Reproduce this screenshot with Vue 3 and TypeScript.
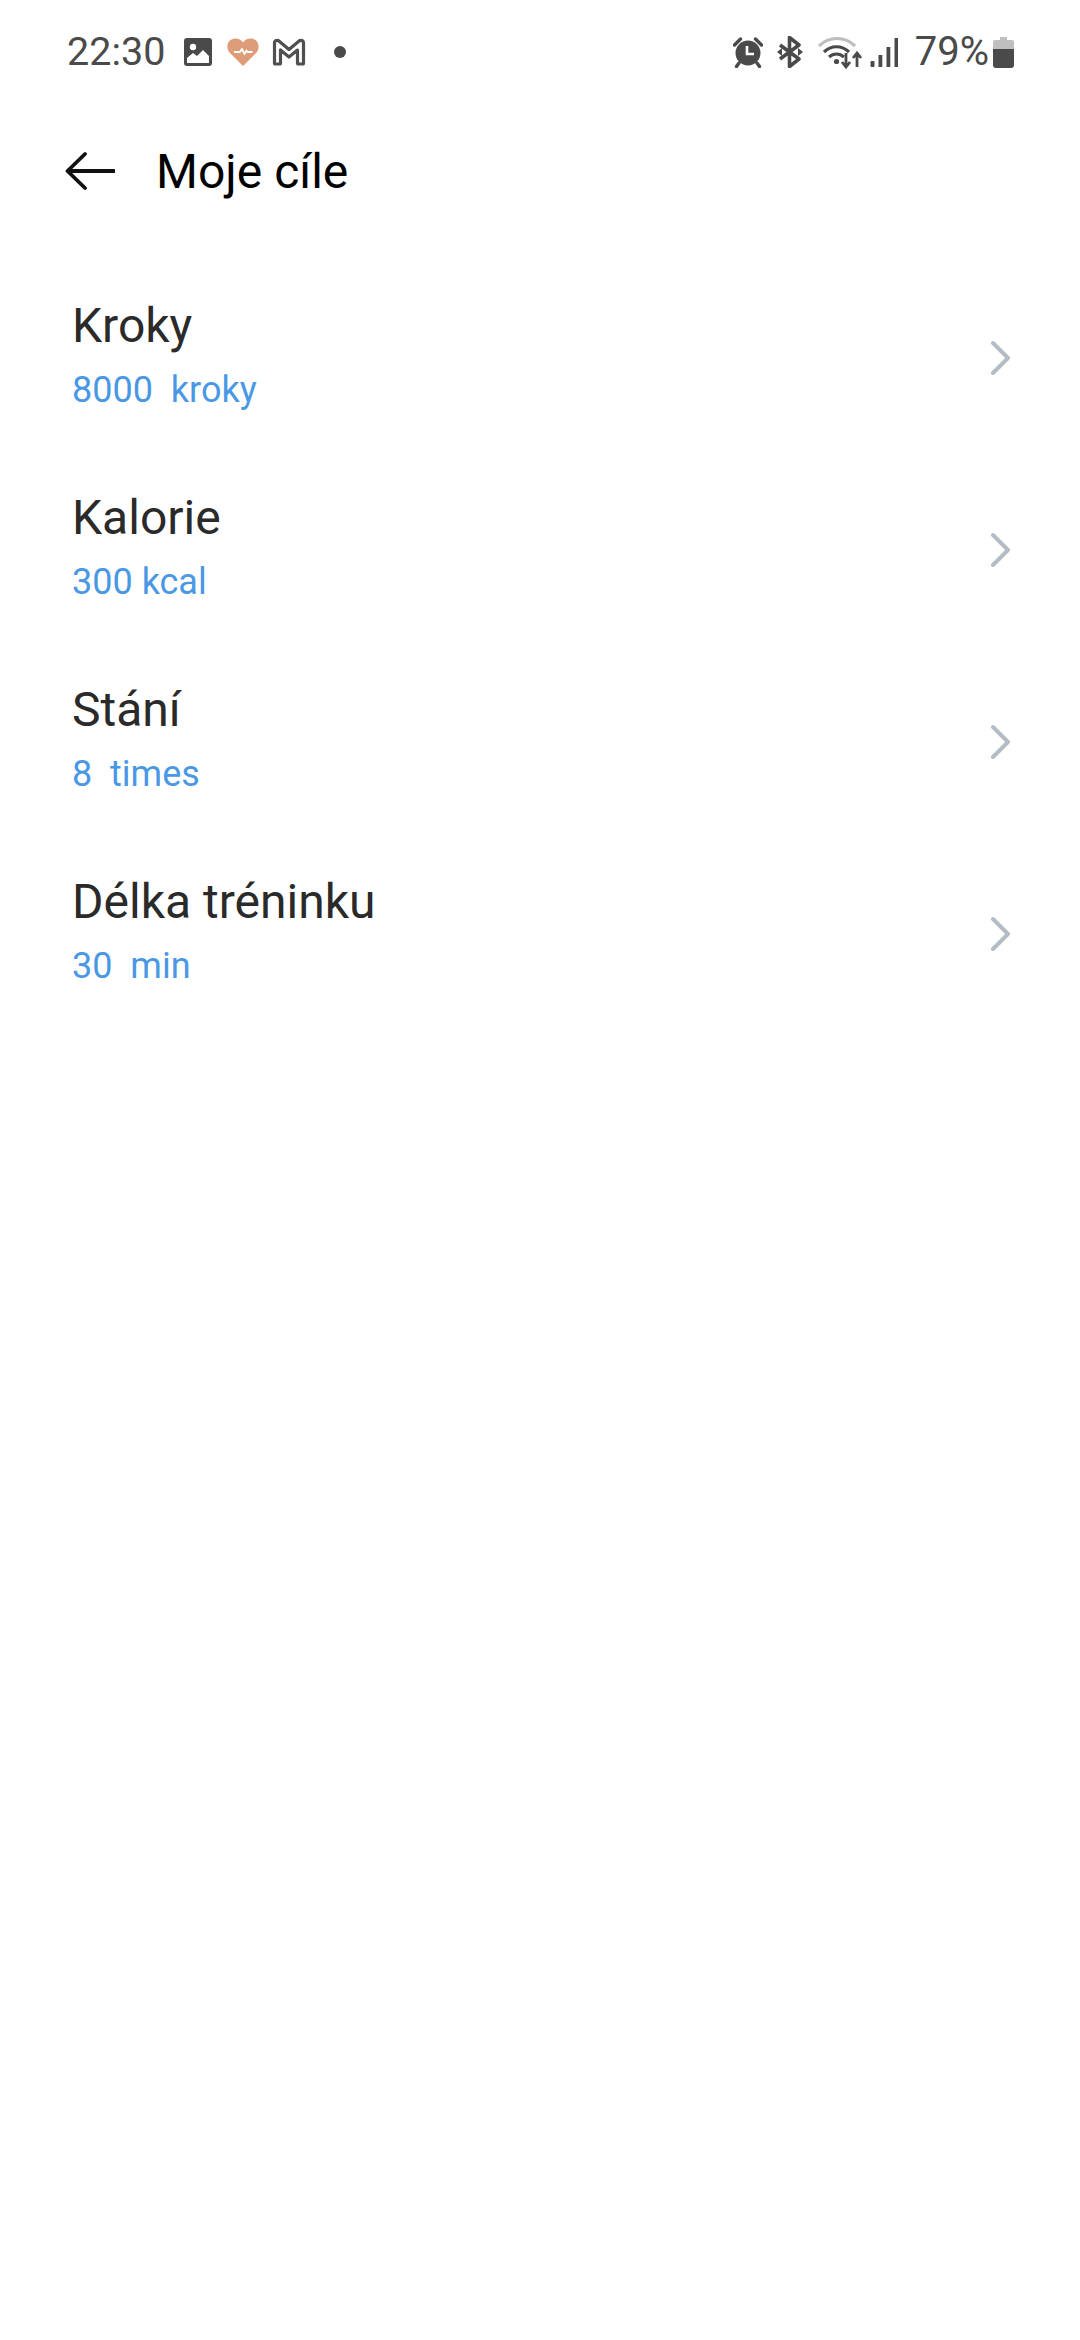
<script setup lang="ts">
interface Goal {
  title: string
  value: string
}

const goals: Goal[] = [
  { title: 'Kroky', value: '8000\u00a0 kroky' },
  { title: 'Kalorie', value: '300 kcal' },
  { title: 'Stání', value: '8\u00a0 times' },
  { title: 'Délka tréninku', value: '30\u00a0 min' },
]
</script>

<template>
  <div class="screen">
    <header class="status">
      <div class="status-left">
        <span class="time">22:30</span>
        <svg class="ic-photo" width="30" height="30" viewBox="0 0 30 30">
          <rect x="1" y="1" width="28" height="28" rx="3" fill="#4a4a4a" />
          <circle cx="10" cy="10" r="3.2" fill="#fff" />
          <path d="M4 26v-5l6-5 4 3 6-6 6 6v7z" fill="#fff" />
        </svg>
        <svg class="ic-heart" width="34" height="30" viewBox="0 0 34 30">
          <path d="M17 29 3.500 15.500C-.5 11 1 2.500 8.500 1.500c3.500-.4 6.500 1 8.500 4 2-3 5-4.400 8.500-4 7.500 1 9 9.500 5 14z" fill="#dc9d78" />
          <path d="M8 15h6l2-3 2.500 5 2-3.500 1 1.500h5" fill="none" stroke="#fff" stroke-width="1.800" stroke-linejoin="round" />
        </svg>
        <svg class="ic-mail" width="34" height="28" viewBox="0 0 34 28">
          <path d="M2.500 25V5c0-2.500 3-3.300 4.700-1.800L17 11.500l9.800-8.300C28.500 1.700 31.500 2.500 31.500 5v20a1 1 0 0 1-1 1h-4a1 1 0 0 1-1-1V12l-8.500 7-8.500-7v13a1 1 0 0 1-1 1h-4a1 1 0 0 1-1-1z" fill="none" stroke="#505050" stroke-width="3.200" stroke-linejoin="round" />
        </svg>
        <span class="dot"></span>
      </div>
      <div class="status-right">
        <svg class="ic-alarm" width="30" height="32" viewBox="0 0 30 32">
          <circle cx="15" cy="17" r="12.500" fill="#4a4a4a" />
          <path d="M1.500 9l6-6M28.500 9l-6-6M6 27l-2.500 3.500M24 27l2.500 3.500" stroke="#4a4a4a" stroke-width="3.400" stroke-linecap="round" />
          <path d="M14 10v8h7" fill="none" stroke="#fff" stroke-width="2.600" />
        </svg>
        <svg class="ic-bt" width="28" height="32" viewBox="0 0 28 32">
          <path d="M4 9l19 14-9.500 7.500V1.500L23 9 4 23" fill="none" stroke="#4a4a4a" stroke-width="3.600" stroke-linejoin="round" />
          <path d="M22 12l5 4-5 4zM6 12l-5 4 5 4z" fill="#4a4a4a" />
        </svg>
        <svg class="ic-wifi" width="46" height="34" viewBox="0 0 46 34">
          <path d="M1 11C11 1 27 1 37 11" fill="none" stroke="#bdbdbd" stroke-width="3.200" />
          <path d="M6 17C13 10 24 10 31 17M11 22c4.500-4 10.500-4 15 0" fill="none" stroke="#4a4a4a" stroke-width="3.200" />
          <circle cx="18.500" cy="26.500" r="2.600" fill="#4a4a4a" />
          <path d="M28 18v13M24 27l4 5 4-5M39 32V19M35 23l4-5 4 5" fill="none" stroke="#4a4a4a" stroke-width="2.800" />
        </svg>
        <svg class="ic-signal" width="28" height="32" viewBox="0 0 28 32">
          <rect x="0.500" y="25" width="4" height="6" rx="1" fill="#4a4a4a" />
          <rect x="8.500" y="19" width="3.800" height="12" fill="#4a4a4a" />
          <rect x="16.500" y="11" width="3.800" height="20" fill="#4a4a4a" />
          <rect x="24.500" y="2" width="3.500" height="29" fill="#4a4a4a" />
        </svg>
        <span class="level">79%</span>
        <svg class="ic-battery" width="21" height="32" viewBox="0 0 21 32">
          <path d="M7 1h7v3h5a2 2 0 0 1 2 2v8H0V6a2 2 0 0 1 2-2h5z" fill="#bfbfbf" />
          <path d="M0 13h21v16a3 3 0 0 1-3 3H3a3 3 0 0 1-3-3z" fill="#4a4a4a" />
        </svg>
      </div>
    </header>

    <nav class="title-bar">
      <svg class="back" width="50" height="40" viewBox="0 0 50 40">
        <path d="M49 20H3M20 3 2.500 20 20 37" fill="none" stroke="#111" stroke-width="3.800" stroke-linecap="round" stroke-linejoin="round" />
      </svg>
      <h1 class="title">Moje cíle</h1>
    </nav>

    <ul class="goals">
      <li v-for="goal in goals" :key="goal.title" class="goal">
        <div class="goal-text">
          <span class="goal-title">{{ goal.title }}</span>
          <span class="goal-value">{{ goal.value }}</span>
        </div>
        <svg class="chevron" width="22" height="36" viewBox="0 0 22 36">
          <path d="M5 3 20 18 5 33" fill="none" stroke="#b4bcc4" stroke-width="4" stroke-linecap="round" stroke-linejoin="round" />
        </svg>
      </li>
    </ul>
  </div>
</template>

<style scoped>
.screen {
  width: 1080px;
  height: 2340px;
  background: #fff;
  font-family: Roboto, "Noto Sans", sans-serif;
  overflow: hidden;
}
.status {
  height: 104px;
  display: flex;
  justify-content: space-between;
  align-items: center;
  padding: 0 66px 0 67px;
  color: #4a4a4a;
}
.status-left,
.status-right {
  display: flex;
  align-items: center;
}
.time {
  font-size: 39.500px;
  line-height: 44px;
  width: 116px;
}
.ic-heart { margin-left: 13px; }
.ic-mail { margin-left: 12px; }
.dot {
  width: 12px;
  height: 12px;
  margin-left: 28px;
  border-radius: 50%;
  background: #4a4a4a;
}
.ic-bt { margin-left: 13px; }
.ic-wifi { margin-left: 14px; }
.ic-signal { margin-left: 6px; }
.level {
  font-size: 40px;
  line-height: 44px;
  margin-left: 17px;
}
.ic-battery { margin-left: 4px; }
.title-bar {
  height: 134px;
  padding-left: 65px;
  display: flex;
  align-items: center;
}
.back { flex: none; }
.title {
  margin: 0 0 0 41px;
  font-size: 48px;
  font-weight: 400;
  color: #000;
}
.goals {
  list-style: none;
  margin: 0;
  padding: 24px 0 0;
}
.goal {
  height: 192px;
  display: flex;
  align-items: center;
  justify-content: space-between;
  padding: 0 70px 0 72px;
}
.goal-text {
  display: flex;
  flex-direction: column;
  gap: 8px;
  padding-bottom: 6px;
}
.goal-title {
  font-size: 48px;
  line-height: 62px;
  color: #2a2a2a;
}
.goal-value {
  font-size: 36px;
  line-height: 50px;
  color: #4a98e4;
}
</style>
